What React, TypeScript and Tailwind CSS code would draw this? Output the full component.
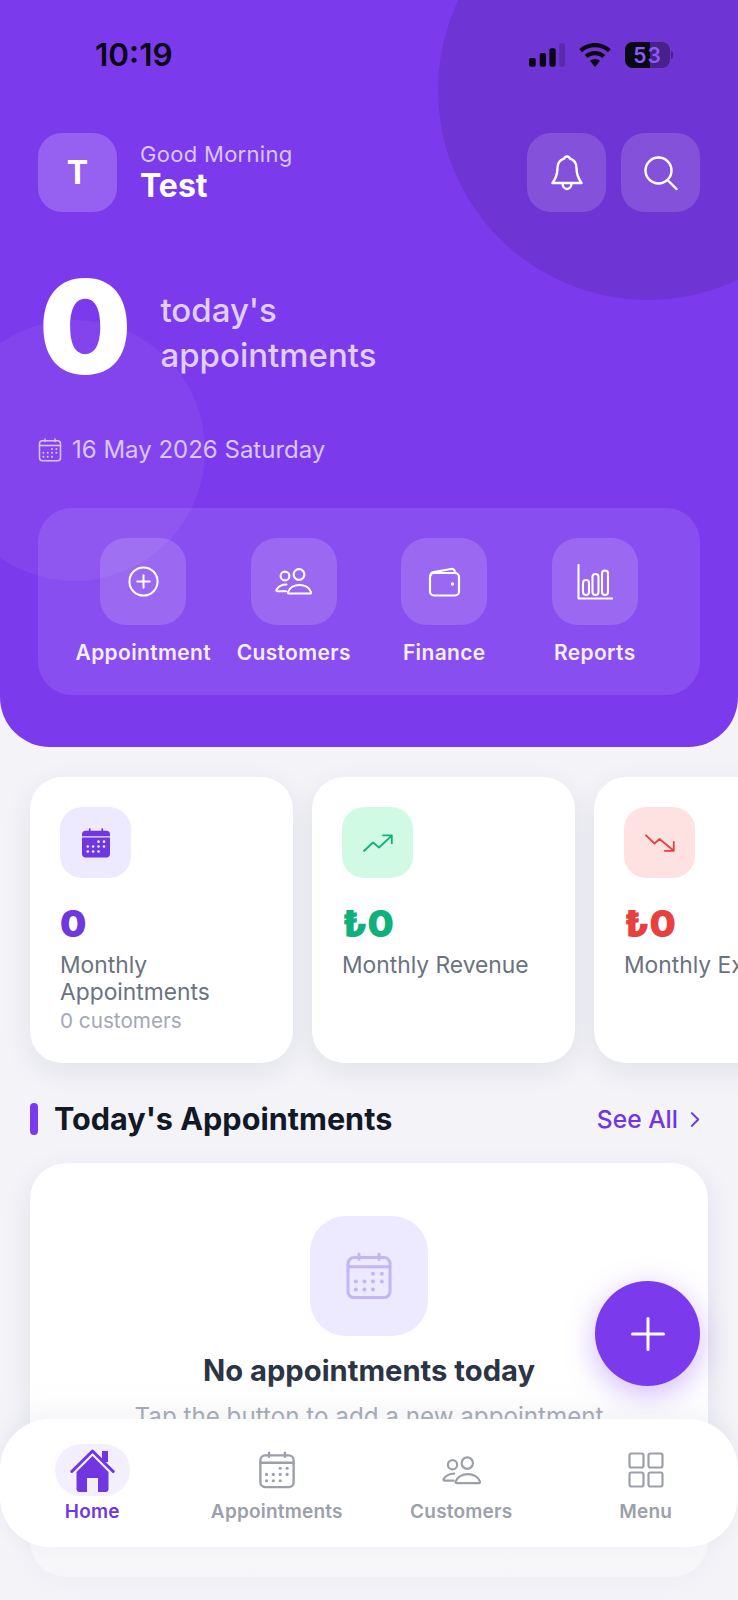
const CalendarIcon = ({ className, filled }: { className?: string; filled?: boolean }) => {
  const dots = [
    [14, 10.9], [18.4, 10.9],
    [5.400, 14.800], [9.700, 14.800], [14, 14.800], [18.400, 14.800],
    [5.400, 18.800], [9.700, 18.800], [14, 18.800],
  ];
  if (filled) {
    return (
      <svg viewBox="0 0 24 24" className={className} fill="currentColor">
        <path d="M7 .8v2M17 .8v2" stroke="currentColor" strokeWidth="1.400" strokeLinecap="round" />
        <path d="M.8 6.500V5C.8 3.400 2 2.200 3.600 2.200h16.800c1.600 0 2.800 1.200 2.800 2.800v1.500z" />
        <path d="M.8 7.600h22.400v13.200c0 1.600-1.200 2.800-2.800 2.800H3.600C2 23.600.8 22.400.8 20.800z" />
        {dots.map(([x, y]) => (
          <circle key={`${x}-${y}`} cx={x} cy={y} r="1.050" fill="#ede9fe" />
        ))}
      </svg>
    );
  }
  return (
    <svg viewBox="0 0 24 24" className={className} fill="none" stroke="currentColor" strokeWidth="1.500" strokeLinecap="round">
      <rect x="1.500" y="2.800" width="21" height="20" rx="3" />
      <path d="M1.500 7.400h21M7 1v2.600M17 1v2.600" />
      {dots.map(([x, y]) => (
        <circle key={`${x}-${y}`} cx={x} cy={y} r="1" fill="currentColor" stroke="none" />
      ))}
    </svg>
  );
};

const PeopleIcon = ({ className }: { className?: string }) => (
  <svg viewBox="0 0 37 27" className={className} fill="none" stroke="currentColor" strokeWidth="2.100" strokeLinecap="round" strokeLinejoin="round">
    <circle cx="10" cy="8" r="4.400" />
    <circle cx="24" cy="6.500" r="5.400" />
    <path d="M14 25.500h21c.9 0 1.400-.7 1-1.500-1.500-4-6-7-11.500-7s-10 3-11.500 7c-.4.8.1 1.500 1 1.500z" />
    <path d="M11.500 16.500C7 16.500 3 19 1.500 21.700c-.4.8.1 1.500 1 1.500h8.500" />
  </svg>
);

const WalletIcon = ({ className }: { className?: string }) => (
  <svg viewBox="0 0 32 30" className={className} fill="none" stroke="currentColor" strokeWidth="2.200" strokeLinecap="round" strokeLinejoin="round">
    <rect x="1.500" y="6" width="29" height="22.500" rx="4" />
    <path d="M2 8.500c.3-1.800 1.500-3 3.200-3.300L22.500 2c2.200-.4 3.800.8 4 3.500" />
    <circle cx="24" cy="17" r="1.700" fill="currentColor" stroke="none" />
  </svg>
);

const BarsIcon = ({ className }: { className?: string }) => (
  <svg viewBox="0 0 36 36" className={className} fill="none" stroke="currentColor" strokeWidth="2.100" strokeLinecap="round" strokeLinejoin="round">
    <path d="M1.500 1v33.500h33.500" />
    <rect x="6" y="16" width="6" height="15" rx="3" />
    <rect x="15.500" y="10" width="6" height="21" rx="3" />
    <rect x="25" y="6.500" width="6" height="24.500" rx="3" />
  </svg>
);

const HomeIcon = ({ className }: { className?: string }) => (
  <svg viewBox="0 0 45 43" className={className}>
    <path d="M1.800 22.500 22.500 2 43.200 22.500" fill="none" stroke="currentColor" strokeWidth="3" strokeLinecap="round" strokeLinejoin="round" />
    <rect x="32" y="2" width="6" height="11" fill="currentColor" />
    <path
      fill="currentColor"
      d="M22.500 7 38.500 23v17c0 1.700-1.300 3-3 3H28V29H17v14H9.500c-1.700 0-3-1.300-3-3V23z"
    />
  </svg>
);

const stats = [
  { value: "0", label: "Monthly Appointments", sub: "0 customers", tile: "bg-[#ede9fe]", tone: "text-[#7036e0]", kind: "calendar" },
  { value: "₺0", label: "Monthly Revenue", sub: "", tile: "bg-[#d1fae5]", tone: "text-[#10b07c]", kind: "up" },
  { value: "₺0", label: "Monthly Expense", sub: "", tile: "bg-[#fee2e2]", tone: "text-[#e8403f]", kind: "down" },
];

const actions = [
  { label: "Appointment", icon: <svg viewBox="0 0 32 32" className="h-[31px] w-[31px]" fill="none" stroke="currentColor" strokeWidth="2.100" strokeLinecap="round"><circle cx="16" cy="16" r="14.500" /><path d="M16 9.500v13M9.500 16h13" /></svg> },
  { label: "Customers", icon: <PeopleIcon className="h-[27px] w-[37px]" /> },
  { label: "Finance", icon: <WalletIcon className="h-[30px] w-[33px]" /> },
  { label: "Reports", icon: <BarsIcon className="h-[36px] w-[36px]" /> },
];

export default function App() {
  return (
    <div className="relative h-[1600px] w-[738px] overflow-hidden bg-[#f3f3f8] font-['Inter',sans-serif]">
      {/* Header */}
      <header className="relative h-[747px] overflow-hidden rounded-b-[50px] bg-[#7c3aed] px-[38px] pt-[40px]">
        <div className="absolute left-[438px] top-[-120px] h-[420px] w-[420px] rounded-full bg-black/10" />
        <div className="absolute left-[-56px] top-[320px] h-[261px] w-[261px] rounded-full bg-white/5" />

        {/* Status bar */}
        <div className="relative flex h-[30px] items-center justify-between pl-[57px] pr-[27px]">
          <span className="text-[31.500px] font-semibold leading-none text-[#0b0714]">10:19</span>
          <div className="flex items-center">
            <svg viewBox="0 0 37 24" className="h-[24px] w-[36px]">
              <rect x="0" y="15" width="7" height="9" rx="2" fill="#0b0714" />
              <rect x="11" y="10" width="6.500" height="14" rx="2" fill="#0b0714" />
              <rect x="21" y="5" width="6.500" height="19" rx="2" fill="#0b0714" />
              <rect x="31" y="0" width="6" height="24" rx="2" fill="#0b0714" fillOpacity="0.2" />
            </svg>
            <svg viewBox="0 0 32 24" className="ml-[14px] h-[24px] w-[32px]" fill="#0b0714">
              <path d="M16 0c6 0 11.500 2.300 15.700 6.200l-2.800 3C25.500 6 21 4.300 16 4.300S6.500 6 3.100 9.200l-2.800-3C4.500 2.300 10 0 16 0z" />
              <path d="M16 8c3.900 0 7.500 1.500 10.200 4l-2.900 3.100C21.400 13.300 18.800 12.300 16 12.300s-5.400 1-7.300 2.800L5.800 12c2.700-2.500 6.300-4 10.200-4z" />
              <path d="M16 16c1.900 0 3.600.7 4.900 1.900L16 24l-4.900-6.100c1.300-1.200 3-1.900 4.900-1.900z" />
            </svg>
            <div className="relative ml-[14px] flex h-[26px] w-[45px] items-center justify-center overflow-hidden rounded-[8px] bg-black/35 text-[21px] font-semibold leading-none tracking-[1px] text-[#8b5cf6]">
              <div className="absolute inset-y-0 left-0 w-[25px] bg-[#0b0714]" />
              <span className="relative">53</span>
            </div>
            <div className="ml-[1px] h-[8px] w-[2px] rounded-r-full bg-black/35" />
          </div>
        </div>

        {/* Greeting */}
        <div className="relative mt-[63px] flex items-center justify-between">
          <div className="flex items-center">
            <div className="flex h-[79px] w-[79px] items-center justify-center rounded-[24px] bg-white/20 text-[32px] font-bold text-white">T</div>
            <div className="ml-[23px]">
              <div className="text-[22px] leading-[26px] tracking-[0.3px] text-[#d9c6fb]">Good Morning</div>
              <div className="mt-[1px] text-[32px] font-bold leading-[36px] text-white">Test</div>
            </div>
          </div>
          <div className="flex gap-[15px] text-white">
            <button className="flex h-[79px] w-[79px] items-center justify-center rounded-[24px] bg-white/15">
              <svg viewBox="0 0 32 36" className="h-[36px] w-[32px]" fill="none" stroke="currentColor" strokeWidth="2.400" strokeLinecap="round" strokeLinejoin="round">
                <path d="M16 1.500c1.500 0 2.500 1 3 2.200 4.300 1.300 6.500 4.800 6.500 9.300 0 6 1.300 10 5 15H1.500c3.700-5 5-9 5-15 0-4.500 2.200-8 6.500-9.300.5-1.200 1.500-2.200 3-2.200z" />
                <path d="M11.500 28c0 3.500 2 6 4.500 6s4.500-2.500 4.500-6" />
              </svg>
            </button>
            <button className="flex h-[79px] w-[79px] items-center justify-center rounded-[24px] bg-white/15">
              <svg viewBox="0 0 34 34" className="h-[34px] w-[34px]" fill="none" stroke="currentColor" strokeWidth="2.400" strokeLinecap="round">
                <circle cx="14.500" cy="14.500" r="13" />
                <path d="M24 24.500l8.500 8.500" />
              </svg>
            </button>
          </div>
        </div>

        {/* Count */}
        <div className="relative mt-[51px] flex h-[140px] items-center">
          <span className="mb-[12px] ml-[1px] text-[130px] font-black leading-[140px] text-white">0</span>
          <div className="ml-[29px] text-[33px] font-medium leading-[45px] text-[#e0cffc]">
            <div>today's</div>
            <div>appointments</div>
          </div>
        </div>

        {/* Date */}
        <div className="relative mt-[32px] flex h-[30px] items-center gap-[10px] text-[24px] text-[#d9c6fb]">
          <CalendarIcon className="h-[24px] w-[24px]" />
          <span>16 May 2026 Saturday</span>
        </div>

        {/* Quick actions */}
        <div className="relative mt-[43px] grid h-[187px] grid-cols-4 rounded-[34px] bg-white/10 px-[30px] pt-[30px]">
          {actions.map((a) => (
            <div key={a.label} className="flex flex-col items-center">
              <div className="flex h-[87px] w-[86px] items-center justify-center rounded-[26px] bg-white/15 text-white">{a.icon}</div>
              <span className="mt-[16px] whitespace-nowrap text-[21px] font-semibold leading-[24px] tracking-[0.35px] text-[#f3edfe]">{a.label}</span>
            </div>
          ))}
        </div>
      </header>

      {/* Stats */}
      <div className="mt-[30px] flex gap-[19px] pl-[30px]">
        {stats.map((s) => (
          <div key={s.label} className="h-[286px] w-[263px] shrink-0 rounded-[32px] bg-white p-[30px] shadow-[0_8px_30px_rgba(30,30,80,0.08)]">
            <div className={`flex h-[71px] w-[71px] items-center justify-center rounded-[22px] ${s.tile} ${s.tone}`}>
              {s.kind === "calendar" && <CalendarIcon filled className="h-[30px] w-[30px]" />}
              {s.kind === "up" && (
                <svg viewBox="0 0 30 18" className="h-[18px] w-[30px]" fill="none" stroke="currentColor" strokeWidth="1.800" strokeLinecap="round" strokeLinejoin="round">
                  <path d="M1 17 10 8.500l6 5L28.500 1.800M20 1.300h8.800v8" />
                </svg>
              )}
              {s.kind === "down" && (
                <svg viewBox="0 0 30 18" className="h-[18px] w-[30px]" fill="none" stroke="currentColor" strokeWidth="1.800" strokeLinecap="round" strokeLinejoin="round">
                  <path d="M1 1.300 9.500 9.500l5-4.500L28.500 16.500M28.800 8v8.800h-9" />
                </svg>
              )}
            </div>
            <div className={`mt-[24px] text-[37px] font-black leading-[44px] ${s.tone}`}>{s.value}</div>
            <div className="mt-[5px] whitespace-pre-line text-[22.800px] leading-[27px] text-[#6b7280]">
              {s.label === "Monthly Appointments" ? "Monthly\nAppointments" : <span className="whitespace-nowrap">{s.label}</span>}
            </div>
            {s.sub && <div className="mt-[3px] text-[20.700px] leading-[26px] text-[#a3a8b3]">{s.sub}</div>}
          </div>
        ))}
      </div>

      {/* Today's appointments */}
      <div className="mt-[40px] flex h-[32px] items-center justify-between pl-[30px] pr-[38px]">
        <div className="flex items-center gap-[16px]">
          <div className="h-[32px] w-[8px] rounded-full bg-[#7c3aed]" />
          <h2 className="text-[30.600px] font-bold leading-none text-[#111827]">Today's Appointments</h2>
        </div>
        <div className="flex items-center gap-[12px] text-[24.600px] font-medium text-[#7036e0]">
          See All
          <svg viewBox="0 0 11 18" className="h-[17px] w-[10px]" fill="none" stroke="currentColor" strokeWidth="2.200" strokeLinecap="round" strokeLinejoin="round">
            <path d="M2 2l7 7-7 7" />
          </svg>
        </div>
      </div>

      <div className="ml-[30px] mt-[28px] flex h-[414px] w-[678px] flex-col items-center rounded-[36px] bg-white pt-[53px] shadow-[0_8px_30px_rgba(30,30,80,0.08)]">
        <div className="flex h-[120px] w-[118px] items-center justify-center rounded-[36px] bg-[#ede9fe] text-[#c4b5f5]">
          <CalendarIcon className="h-[48px] w-[48px]" />
        </div>
        <h3 className="mt-[18px] text-[29.200px] font-bold leading-[34px] text-[#2b3444]">No appointments today</h3>
        <p className="mt-[14px] whitespace-nowrap text-[24.200px] leading-[30px] text-[#9ca3af]">Tap the button to add a new appointment</p>
      </div>

      {/* Fade behind the nav */}
      <div className="pointer-events-none absolute inset-x-0 bottom-0 h-[225px] bg-gradient-to-b from-[#f3f3f8]/0 to-[#f3f3f8]/80" />

      {/* FAB */}
      <button className="absolute bottom-[214px] right-[38px] flex h-[105px] w-[105px] items-center justify-center rounded-full bg-[#7c3aed] text-white shadow-[0_8px_30px_rgba(124,58,237,0.35)]">
        <svg viewBox="0 0 34 34" className="h-[34px] w-[34px]" fill="none" stroke="currentColor" strokeWidth="3" strokeLinecap="round">
          <path d="M17 1.500v31M1.500 17h31" />
        </svg>
      </button>

      {/* Bottom nav */}
      <nav className="absolute inset-x-0 bottom-[53px] grid h-[128px] grid-cols-4 rounded-[50px] bg-white shadow-[0_-4px_24px_rgba(30,30,70,0.05)]">
        <div className="flex flex-col items-center pt-[25px] text-[#7036e0]">
          <div className="flex h-[52px] w-[75px] items-center justify-center rounded-full bg-[#f3effe]">
            <HomeIcon className="h-[43px] w-[45px]" />
          </div>
          <span className="mt-[4px] text-[19px] font-semibold leading-[24px] tracking-[0.2px]">Home</span>
        </div>
        <div className="flex flex-col items-center pt-[25px] text-[#9ca0aa]">
          <div className="flex h-[52px] items-center justify-center"><CalendarIcon className="h-[38px] w-[38px]" /></div>
          <span className="mt-[4px] text-[19px] font-semibold leading-[24px] tracking-[0.2px]">Appointments</span>
        </div>
        <div className="flex flex-col items-center pt-[25px] text-[#9ca0aa]">
          <div className="flex h-[52px] items-center justify-center"><PeopleIcon className="h-[29px] w-[39px]" /></div>
          <span className="mt-[4px] text-[19px] font-semibold leading-[24px] tracking-[0.2px]">Customers</span>
        </div>
        <div className="flex flex-col items-center pt-[25px] text-[#9ca0aa]">
          <div className="flex h-[52px] items-center justify-center">
            <svg viewBox="0 0 36 36" className="h-[36px] w-[36px]" fill="none" stroke="currentColor" strokeWidth="2.200">
              <rect x="1.500" y="1.500" width="14" height="14" rx="2" />
              <rect x="20.500" y="1.500" width="14" height="14" rx="2" />
              <rect x="1.500" y="20.500" width="14" height="14" rx="2" />
              <rect x="20.500" y="20.500" width="14" height="14" rx="2" />
            </svg>
          </div>
          <span className="mt-[4px] text-[19px] font-semibold leading-[24px] tracking-[0.2px]">Menu</span>
        </div>
      </nav>
    </div>
  );
}
